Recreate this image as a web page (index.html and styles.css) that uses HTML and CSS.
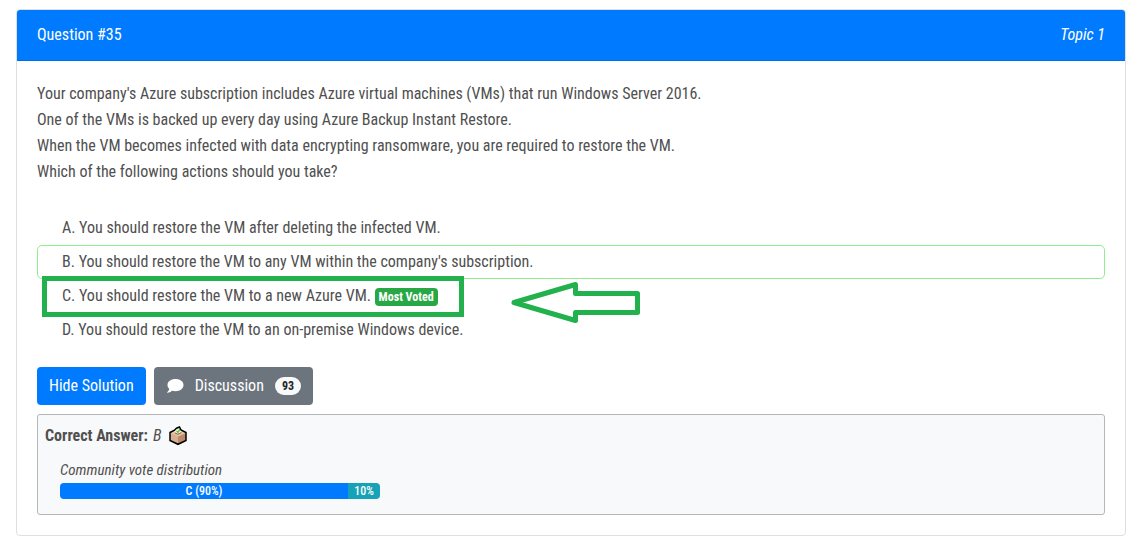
FILE: index.html
```html
<!DOCTYPE html>
<html lang="en">
<head>
<meta charset="utf-8">
<meta name="viewport" content="width=device-width, initial-scale=1">
<title>Question #35</title>
<link rel="stylesheet" href="styles.css">
</head>
<body>
<main class="card">
  <header class="card-header">
    <span>Question #35</span>
    <span class="topic">Topic 1</span>
  </header>
  <div class="card-body">
    <p class="question">Your company's Azure subscription includes Azure virtual machines (VMs) that run Windows Server 2016.<br>
      One of the VMs is backed up every day using Azure Backup Instant Restore.<br>
      When the VM becomes infected with data encrypting ransomware, you are required to restore the VM.<br>
      Which of the following actions should you take?</p>
    <ul class="choices">
      <li class="choice">A. You should restore the VM after deleting the infected VM.</li>
      <li class="choice choice-correct">B. You should restore the VM to any VM within the company's subscription.</li>
      <li class="choice choice-marked">C. You should restore the VM to a new Azure VM. <span class="badge badge-voted">Most Voted</span>
        <span class="mark-box"></span>
        <svg class="mark-arrow" width="130" height="44" viewBox="0 0 130 44" fill="none" stroke="#22b14c" stroke-width="5" aria-hidden="true">
          <path d="M4 22.500 65.500 4.500V13.500H127.500V32.500H65.500V40.500Z" stroke-linejoin="round"/>
        </svg>
      </li>
      <li class="choice">D. You should restore the VM to an on-premise Windows device.</li>
    </ul>
    <div class="actions">
      <button class="btn btn-primary" type="button">Hide Solution</button>
      <button class="btn btn-secondary" type="button">
        <svg class="comment" width="18" height="16" viewBox="0 0 18 16" fill="#fff" aria-hidden="true">
          <path d="M9.500 1C4.800 1 1.500 3.500 1.500 6.900c0 1.600.7 2.900 1.800 3.900C3 12.500 2 13.700.8 14.700c2.200.1 4-.7 5.200-1.900 1 .3 2.200.4 3.500.4 4.600 0 8-2.700 8-6.200S14.100 1 9.500 1Z"/>
        </svg>
        <span>Discussion</span>
        <span class="badge badge-count">93</span>
      </button>
    </div>
    <section class="answer">
      <div class="answer-line">
        <strong>Correct Answer:</strong>
        <em>B</em>
        <svg class="ballot" width="20" height="20" viewBox="0 0 20 20" aria-hidden="true">
          <path d="M2 6.500 10 3 18 6.500V14.500L10 18.300 2 14.500Z" fill="#d8ae92"/>
          <path d="M10 10.500 18 7V14.300L10 18Z" fill="#bb8a6c"/>
          <path d="M2.500 7 10 3.500 17.500 7 10 10.500Z" fill="#e6c3a8"/>
          <path d="M6.500 6 8 3 11.500 1 13.500 5.500 10 8Z" fill="#f2f7ee"/>
          <path d="M8.500 5 10 6.300 12 3" fill="none" stroke="#62c43b" stroke-width="1.500"/>
          <path d="M7 7 10 8.300 13.500 6.700" fill="none" stroke="#8d6048"/>
          <path d="M2 6.500 6.500 4.200 8.500 2.200 11.500 1 13 4 18 6.500V14.500L10 18.300 2 14.500Z" fill="none" stroke="#000" stroke-width="1.500"/>
        </svg>
      </div>
      <div class="votes">
        <div class="votes-title">Community vote distribution</div>
        <div class="bar">
          <div class="bar-part" style="width:90%">C (90%)</div>
          <div class="bar-part bar-other" style="width:10%">10%</div>
        </div>
      </div>
    </section>
  </div>
</main>
</body>
</html>
```
FILE: styles.css
```css
* { box-sizing: border-box; }
body {
  margin: 0;
  padding: 9px 19px 8px 16px;
  background: #fff;
  color: #505050;
  font: 400 16px/26px "Roboto Condensed", "Liberation Sans Narrow", Roboto, sans-serif;
}
.card { border: 1px solid #dfdfdf; border-radius: 4px; }
.card-header {
  display: flex;
  justify-content: space-between;
  padding: 12px 20px;
  border-bottom: 1px solid #0070e8;
  border-radius: 3px 3px 0 0;
  background: #007bff;
  color: #fff;
}
.topic { font-style: italic; }
.card-body { padding: 20px; }
.question { margin: 0 0 26px; }
.choices { margin: 0 0 20px; padding: 0; list-style: none; }
.choice { padding: 4px 25px; }
.choice-correct {
  padding: 3px 24px;
  border: 1px solid #90ee90;
  border-radius: 5px;
}
.choice-marked { position: relative; }
.mark-box {
  position: absolute;
  top: -3px;
  left: 5px;
  width: 422px;
  height: 41px;
  border: 5px solid #22b14c;
}
.mark-arrow { position: absolute; top: 1px; left: 473px; }
.badge {
  display: inline-block;
  border-radius: 4px;
  font-size: 12px;
  font-weight: 700;
  line-height: 12px;
  padding: 3px 4px;
  vertical-align: baseline;
}
.badge-voted { background: #28a745; color: #fff; }
.badge-count { padding: 3px 7px; border-radius: 10px; background: #f8f9fa; color: #212529; }
.actions { display: flex; gap: 8px; margin-bottom: 9px; }
.btn {
  display: flex;
  align-items: center;
  gap: 11px;
  height: 38px;
  padding: 0 12px;
  border: 0;
  border-radius: 4px;
  color: #fff;
  font: inherit;
}
.btn-primary { background: #007bff; }
.btn-secondary { background: #6c757d; }
.answer {
  padding: 8px 7px 15px;
  border: 1px solid #b4b6b8;
  border-radius: 3px;
  background: #f8f9fa;
}
.answer-line { display: flex; align-items: center; gap: 5px; }
.ballot { margin-left: 2px; }
.votes { max-width: 335px; margin-top: 11px; padding-left: 15px; }
.votes-title { font-size: 15px; font-style: italic; line-height: 20px; margin-bottom: 3px; }
.bar { display: flex; overflow: hidden; border-radius: 4px; background: #e9ecef; }
.bar-part {
  background: #007bff;
  color: #fff;
  font-size: 12px;
  font-weight: 500;
  line-height: 16px;
  text-align: center;
}
.bar-other { background: #17a2b8; }
```
